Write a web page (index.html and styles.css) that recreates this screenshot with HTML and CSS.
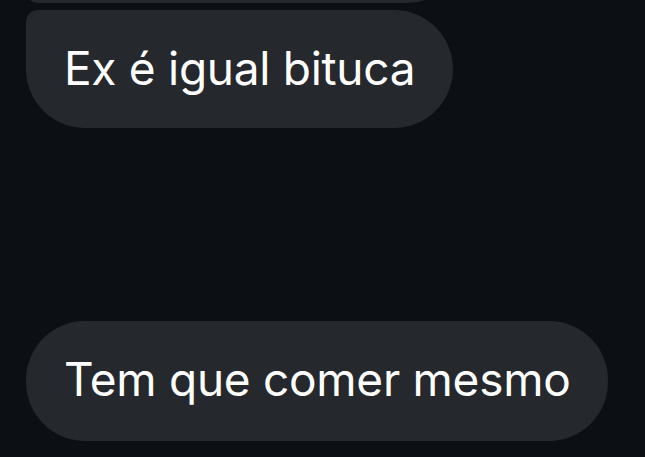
FILE: index.html
```html
<!DOCTYPE html>
<html lang="pt-BR">
<head>
  <meta charset="UTF-8" />
  <title>Mensagens</title>
  <meta name="viewport" content="width=device-width, initial-scale=1.0" />
  <link rel="stylesheet" href="styles.css">
</head>
<body>
  <div class="thread">
    <!-- previous message, scrolled mostly out of view -->
    <div class="bubble bubble-cut" aria-hidden="true">&nbsp;</div>

    <div class="bubble bubble-grouped">Ex é igual bituca</div>

    <div class="bubble bubble-alone">Tem que comer mesmo</div>
  </div>
</body>
</html>
```

FILE: styles.css
```css
/* ------------------------------
   BASE
------------------------------- */
* {
  margin: 0;
  padding: 0;
  box-sizing: border-box;
}
body {
  width: 100%;
  height: 100vh;
  overflow: hidden;
  background: #0c0f13;
  font-family: Inter, "Noto Sans", "Liberation Sans", sans-serif;
  color: #ffffff;
}

/* ------------------------------
   THREAD
------------------------------- */
.thread {
  display: flex;
  flex-direction: column;
  align-items: flex-start;
  padding-left: 26px;
}
.bubble {
  background: #25282d;
  padding: 31px 38px 33px;
  font-size: 46px;
  line-height: 54px;
  letter-spacing: -0.28px;
  border-radius: 59px;
  white-space: nowrap;
}

/* received message above, only its bottom edge shows */
.bubble-cut {
  width: 440px;
  margin-top: -115px;
  border-radius: 59px 59px 59px 12px;
}
.bubble-grouped {
  margin-top: 7px;
  border-radius: 12px 59px 59px 59px;
}
.bubble-alone {
  margin-top: 193px;
  padding-bottom: 35px;
}
```
